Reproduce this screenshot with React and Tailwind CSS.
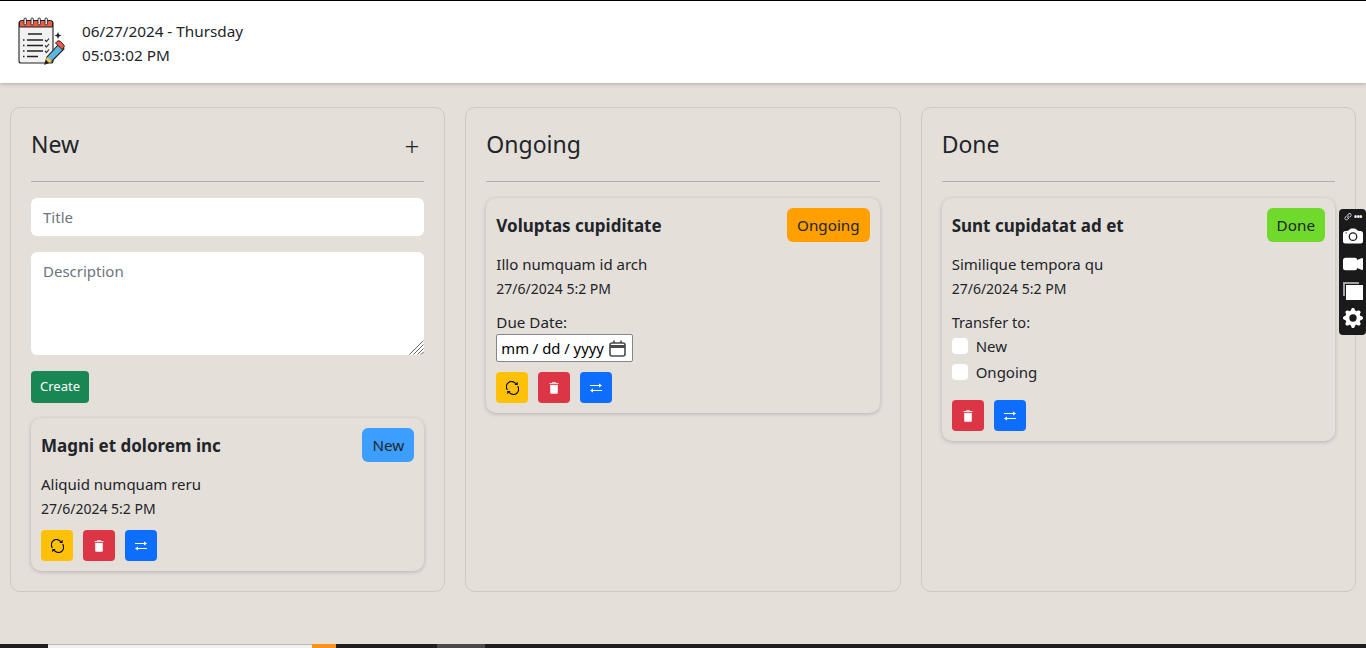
import React from 'react';
import { BsCameraFill, BsCameraVideoFill, BsGearFill, BsLink45Deg } from 'react-icons/bs';

function Logo() {
  return (
    <svg width="48" height="50" viewBox="0 0 48 50" className="shrink-0">
      <rect x="1" y="4" width="34" height="42" rx="2" fill="#f1f1f1" stroke="#222" strokeWidth="1.1" />
      <path d="M1.5 5.5 a2 2 0 0 1 2-2 h29 a2 2 0 0 1 2 2 V10 H1.5 Z" fill="#ef5a45" stroke="#222" strokeWidth="1" />
      {[7, 14, 21, 28].map((x) => (
        <rect key={x} x={x - 1} y="1" width="2.4" height="7" rx="1.2" fill="#f1f1f1" stroke="#222" strokeWidth="0.9" />
      ))}
      <path d="M10 17 H24 M9 23 H25 M9 28.5 H25 M9 34 H25 M9 39.5 H20" stroke="#222" strokeWidth="1.3" />
      <path d="M5 23 h1.5 M5 28.5 h1.5 M5 34 h1.5 M5 39.5 h1.5" stroke="#222" strokeWidth="1.3" />
      <path d="M27 23 l1.5 1.5 l2.5 -3 M27 28.5 l1.5 1.5 l2.5 -3 M27 34 l1.5 1.5 l2.5 -3" stroke="#222" strokeWidth="1.1" fill="none" />
      <path d="M27 47 L29 40 L41 27 L46 32 L34 44 Z" fill="#62b4e0" stroke="#222" strokeWidth="1.1" />
      <path d="M39 24.5 a2.5 2.5 0 0 1 3.5 0 l3 3 a2.5 2.5 0 0 1 0 3.5 l-1.5 1.5 l-6.5 -6.5 Z" fill="#ef5a45" stroke="#222" strokeWidth="1" />
      <path d="M29 40 L34 44 L31 46 L28 43 Z" fill="#f6c945" />
      <path d="M27 47 L28 43 L31 46 Z" fill="#222" />
      <path d="M40 15 l1 2.5 l2.5 1 l-2.5 1 l-1 2.5 l-1 -2.5 l-2.5 -1 l2.5 -1 Z" fill="#222" />
    </svg>
  );
}

function SyncIcon() {
  return (
    <svg width="13" height="14" viewBox="0 0 14 15" fill="none" stroke="black" strokeWidth="1.2">
      <path d="M1.5 9.5 A5.6 5.6 0 0 1 10.5 2.8" />
      <path d="M12.5 5.5 A5.6 5.6 0 0 1 3.5 12.2" />
      <path d="M12.6 0.8 V4.4 H9 Z" fill="black" stroke="none" />
      <path d="M1.4 14.2 V10.6 H5 Z" fill="black" stroke="none" />
    </svg>
  );
}

function TrashIcon() {
  return (
    <svg width="10" height="12" viewBox="0 0 10 12" fill="white">
      <rect x="3" y="0" width="4" height="1" opacity="0.7" />
      <rect x="0.5" y="1" width="9" height="1.2" opacity="0.8" />
      <path d="M1.2 3 H8.8 V10.8 a1 1 0 0 1 -1 1 H2.2 a1 1 0 0 1 -1 -1 Z" />
    </svg>
  );
}

function TransferIcon() {
  return (
    <svg width="12" height="10" viewBox="0 0 12 10" fill="white">
      <rect x="0" y="2" width="10" height="1" />
      <path d="M9 0.4 L12 2.5 L9 4.6 Z" />
      <rect x="2" y="7" width="10" height="1" />
      <path d="M3 5.4 L0 7.5 L3 9.6 Z" />
    </svg>
  );
}

function ActionButton({ color, children }) {
  return (
    <button className={`w-8 h-[31px] rounded-[4px] flex items-center justify-center ${color}`}>
      {children}
    </button>
  );
}

function Actions({ sync = true }) {
  return (
    <div className="flex gap-[10px]">
      {sync && (
        <ActionButton color="bg-[#ffc107]">
          <SyncIcon />
        </ActionButton>
      )}
      <ActionButton color="bg-[#dc3545]">
        <TrashIcon />
      </ActionButton>
      <ActionButton color="bg-[#0d6efd]">
        <TransferIcon />
      </ActionButton>
    </div>
  );
}

function TaskCard({ title, badge, badgeColor, description, children, actions }) {
  return (
    <div className="rounded-[10px] bg-[#e4dfd9] shadow-[0_1px_4px_rgba(0,0,0,0.2)] p-[10px]">
      <div className="flex items-center justify-between h-[34px]">
        <h5 className="text-[17px] font-bold text-[#212529] pt-0.5">{title}</h5>
        <span className={`h-[34px] px-[10px] rounded-[6px] flex items-center text-[15.25px] text-[#212529] ${badgeColor}`}>{badge}</span>
      </div>
      <p className="mt-[10px] leading-6 h-6 text-[15px]">{description}</p>
      <p className="mt-[2px] text-[14px] leading-[21px]">27/6/2024 5:2 PM</p>
      {children}
      <div className="mt-[11px]">{actions}</div>
    </div>
  );
}

function Column({ title, add, children }) {
  return (
    <section className="rounded-[10px] border border-[#cdc9c3] px-5 pt-5">
      <div className="flex items-center justify-between h-[37px] mt-[-3px]">
        <h3 className="text-[23px] leading-9 text-[#212529]">{title}</h3>
        {add && <span className="text-[26px] leading-none mt-[5px] mr-[5px] font-light text-[#212529]">+</span>}
      </div>
      <hr className="mt-[19px] mb-4 border-t border-[#b3b0ab]" />
      {children}
    </section>
  );
}

export default function App() {
  return (
    <div className="h-screen flex flex-col bg-[#e4dfd9] text-[#212529] text-[15px] font-['Noto_Sans','Open_Sans',sans-serif] overflow-hidden relative">
      <header className="h-[83px] shrink-0 bg-white border-t border-black shadow-[0_1px_4px_rgba(0,0,0,0.25)] flex items-center pl-[18px] gap-4">
        <Logo />
        <div className="leading-6 text-[15.3px] pt-0.5">
          <div>06/27/2024 - Thursday</div>
          <div>05:03:02 PM</div>
        </div>
      </header>

      <main className="flex-1 grid grid-cols-3 gap-5 pt-6 pb-[52px] px-[10px] min-h-0">
        <Column title="New" add>
          <input placeholder="Title" className="w-full h-[38px] rounded-[6px] bg-white px-3 text-[15px] placeholder:text-[#6c757d] outline-none block" />
          <div className="relative mt-4">
            <textarea placeholder="Description" className="w-full h-[103px] rounded-[6px] bg-white px-3 py-2 text-[15px] placeholder:text-[#6c757d] outline-none block resize-none" />
            <svg width="15" height="15" viewBox="0 0 15 15" className="absolute right-0 bottom-0" stroke="#666" strokeWidth="1">
              <path d="M14.5 0.5 L0.5 14.5 M14.5 4.5 L4.5 14.5 M14.5 8.5 L8.5 14.5 M14.5 12 L12 14.5" />
            </svg>
          </div>
          <button className="mt-4 h-8 w-[58px] rounded-[4px] bg-[#198754] text-white text-[13px]">Create</button>
          <div className="mt-[15px]">
            <TaskCard title="Magni et dolorem inc" badge="New" badgeColor="bg-[#3c9fff]" description="Aliquid numquam reru" actions={<Actions />} />
          </div>
        </Column>

        <Column title="Ongoing">
          <TaskCard
            title="Voluptas cupiditate"
            badge="Ongoing"
            badgeColor="bg-[#ffa000]"
            description="Illo numquam id arch"
            actions={<Actions />}
          >
            <p className="mt-[2px] pt-[9px] leading-6 text-[15.2px]">Due Date:</p>
            <div className="w-[137px] h-7 mb-[-1px] bg-white border border-[#85858f] rounded-[2px] flex items-center justify-between pl-1 pr-[6px] text-black">
              <span className="whitespace-nowrap text-[14.8px]">mm / dd / yyyy</span>
              <svg width="17" height="17" viewBox="0 0 17 17" fill="none" stroke="#4a4a4a" strokeWidth="1.6" className="shrink-0">
                <rect x="1" y="3" width="15" height="13" rx="2" />
                <path d="M1 6.5 H16" strokeWidth="3" />
                <path d="M5 0.5 V3 M12 0.5 V3" />
              </svg>
            </div>
          </TaskCard>
        </Column>

        <Column title="Done">
          <TaskCard
            title="Sunt cupidatat ad et"
            badge="Done"
            badgeColor="bg-[#6fd92c]"
            description="Similique tempora qu"
            actions={<Actions sync={false} />}
          >
            <p className="mt-[2px] pt-[9px] leading-6 text-[14.6px]">Transfer to:</p>
            <div className="flex items-center gap-2 h-[26px] mt-[-1px]">
              <span className="w-4 h-4 rounded-[4px] bg-white" />
              <span>New</span>
            </div>
            <div className="flex items-center gap-2 h-[26px] mb-[15px]">
              <span className="w-4 h-4 rounded-[4px] bg-white" />
              <span>Ongoing</span>
            </div>
          </TaskCard>
        </Column>
      </main>

      <footer className="h-1 shrink-0 bg-[#1f1f1f] flex">
        <div className="w-12" />
        <div className="w-[288px] bg-[#f0f0f0] border-t border-[#bbb] relative">
          <div className="absolute right-0 top-[-1px] w-6 h-1 bg-[#f7941d]" />
        </div>
        <div className="w-[101px]" />
        <div className="w-12 bg-[#4a4a4a]" />
      </footer>

      <div className="absolute right-0 top-[209px] w-[27px] h-[126px] bg-[#1a1a1a] rounded-[4px] flex flex-col items-center text-white pt-[3px]">
        <div className="flex items-center h-[10px] gap-px">
          <BsLink45Deg className="text-[10px]" />
          <span className="text-[8px] leading-none font-bold tracking-tighter">•••</span>
        </div>
        <BsCameraFill className="text-[20px] mt-[4px]" />
        <BsCameraVideoFill className="text-[20px] mt-[8px]" />
        <svg width="20" height="18" viewBox="0 0 20 18" className="mt-[8px]" fill="white">
          <path d="M0 0 H16 V2 H2 V14 H0 Z" opacity="0.6" />
          <rect x="3" y="3" width="17" height="15" />
        </svg>
        <BsGearFill className="text-[20px] mt-[8px]" />
      </div>
    </div>
  );
}
